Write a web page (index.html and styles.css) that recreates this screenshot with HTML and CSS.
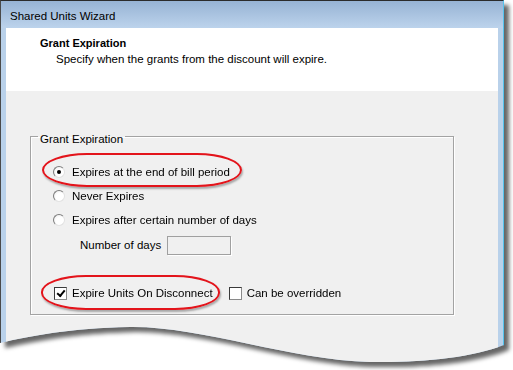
FILE: index.html
```html
<!DOCTYPE html>
<html lang="en">

<head>
    <meta charset="UTF-8">
    <meta name="viewport" content="width=device-width, initial-scale=1.0">
    <title>Shared Units Wizard</title>
    <link rel="stylesheet" href="styles.css">
</head>

<body>
<div class="shot">
    <div class="window">
        <div class="titlebar">Shared Units Wizard</div>

        <div class="frame">
            <div class="header">
                <div class="header-title">Grant Expiration</div>
                <div class="header-desc">Specify when the grants from the discount will expire.</div>
            </div>

            <div class="page">
                <fieldset class="group">
                    <legend>Grant Expiration</legend>

                    <div class="row">
                        <label class="option callout callout-first">
                            <input type="radio" name="expire" class="radio" checked />
                            Expires at the end of bill period
                        </label>
                    </div>
                    <div class="row">
                        <label class="option">
                            <input type="radio" name="expire" class="radio" />
                            Never Expires
                        </label>
                    </div>
                    <div class="row">
                        <label class="option">
                            <input type="radio" name="expire" class="radio" />
                            Expires after certain number of days
                        </label>
                    </div>
                    <div class="row days-row">
                        <span class="days-label">Number of days</span>
                        <input type="text" class="days-field" disabled />
                    </div>

                    <div class="row check-row">
                        <label class="option callout callout-second">
                            <input type="checkbox" class="checkbox" checked />
                            Expire Units On Disconnect
                        </label>
                        <label class="option override">
                            <input type="checkbox" class="checkbox" />
                            Can be overridden
                        </label>
                    </div>
                </fieldset>
            </div>
        </div>
    </div>
</div>
</body>

</html>
```

FILE: styles.css
```css
body {
    margin: 0;
    background: #ffffff;
    font-family: "Liberation Sans", Arial, sans-serif;
    font-size: 11.5px;
    color: #000000;
    overflow: hidden;
}

/* 影付きの破れたスクリーンショット */
.shot {
    width: 504px;
    height: 370px;
    filter: drop-shadow(5px 5px 2px rgba(0, 0, 0, 0.6));
}

.window {
    box-sizing: border-box;
    width: 504px;
    height: 366px;
    display: flex;
    flex-direction: column;
    border-top: 1px solid #2b2b2b;
    border-left: 1px solid #4a4a4a;
    border-right: 1px solid #55c4ee;
    background: #b9d1ea;
    clip-path: path('M0 0 H504 V345 C470 358 420 363 370 362 C290 360 200 326 130 327 C70 328 30 336 0 343 Z');
}

.titlebar {
    height: 27px;
    flex: none;
    display: flex;
    align-items: center;
    padding: 2px 0 0 9px;
    box-sizing: border-box;
    background: linear-gradient(#97b3d4, #bcd3ec);
    font-size: 11.5px;
}

.frame {
    flex: 1;
    display: flex;
    flex-direction: column;
    padding: 0 5px;
}

.header {
    height: 63px;
    flex: none;
    box-sizing: border-box;
    background: #ffffff;
    padding: 8px 0 0 34px;
    line-height: 14px;
}

.header-title {
    font-weight: bold;
    font-size: 11px;
}

.header-desc {
    margin-top: 2px;
    padding-left: 16px;
}

.page {
    flex: 1;
    background: #f0f0f0;
    padding: 35px 0 0 24px;
}

.group {
    box-sizing: border-box;
    width: 424px;
    margin: 0;
    padding: 14px 0 9px 22px;
    border: 1px solid #a3a3a3;
    box-shadow: inset 1px 1px 0 #ffffff, 1px 1px 0 #ffffff;
}

.group legend {
    margin-left: -15px;
    padding: 6px 2px 0;
    line-height: 14px;
}

.row {
    height: 24px;
    display: flex;
    align-items: center;
}

.option {
    position: relative;
    display: flex;
    align-items: center;
    column-gap: 7px;
    height: 24px;
}

.radio {
    appearance: none;
    margin: 0;
    width: 12px;
    height: 12px;
    border-radius: 50%;
    border: 1px solid;
    border-color: #7c7c7c #e2e2e2 #e2e2e2 #7c7c7c;
    background: radial-gradient(circle at 60% 60%, #ffffff 45%, #e4e4e4 100%);
    box-sizing: border-box;
    position: relative;
}

.radio:checked::after {
    content: "";
    position: absolute;
    top: 3px;
    left: 3px;
    width: 4px;
    height: 4px;
    border-radius: 50%;
    background: #000000;
}

.checkbox {
    appearance: none;
    margin: 0 0 0 1px;
    width: 13px;
    height: 13px;
    border: 1px solid #3a3a3a;
    border-right-color: #8a8a8a;
    border-bottom-color: #8a8a8a;
    background: #ffffff;
    box-sizing: border-box;
    position: relative;
}

.check-row .option {
    column-gap: 5px;
}

.checkbox:checked::after {
    content: "";
    position: absolute;
    top: 2px;
    left: 2px;
    width: 6px;
    height: 3px;
    border-left: 2px solid #000000;
    border-bottom: 2px solid #000000;
    transform: rotate(-50deg);
}

.days-row {
    height: 23px;
    align-items: flex-end;
    padding-left: 27px;
}

.days-label {
    line-height: 19px;
}

.days-field {
    margin: 0 0 0 6px;
    width: 64px;
    height: 19px;
    box-sizing: border-box;
    border: 1px solid #a0a0a0;
    box-shadow: 1px 1px 0 #ffffff;
    background: #f0f0f0;
}

.check-row {
    margin-top: 26px;
}

.override {
    margin-left: 15px;
}

/* 赤い注釈の楕円 */
.callout::before {
    content: "";
    position: absolute;
    border: 2px solid #e3141b;
    border-radius: 45px / 17px;
    box-shadow: 1px 2px 2px rgba(0, 0, 0, 0.3);
}

.callout-first::before {
    left: -11px;
    right: -12px;
    top: -7px;
    bottom: -3px;
}

.callout-second::before {
    left: -12px;
    right: -7px;
    top: -6px;
    bottom: -5px;
}
```
